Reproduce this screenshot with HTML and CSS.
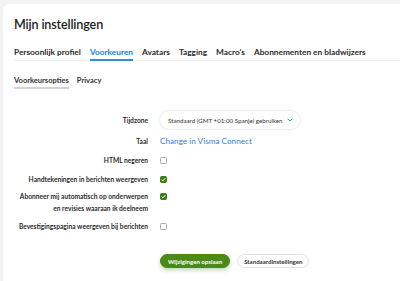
FILE: index.html
```html
<!DOCTYPE html>
<html lang="nl">
<head>
<meta charset="utf-8">
<link rel="stylesheet" href="styles.css">
</head>
<body>
<div class="card">
  <h1 class="title">Mijn instellingen</h1>
  <nav class="tabs">
    <span class="tab">Persoonlijk profiel</span>
    <span class="tab active">Voorkeuren</span>
    <span class="tab">Avatars</span>
    <span class="tab">Tagging</span>
    <span class="tab">Macro's</span>
    <span class="tab">Abonnementen en bladwijzers</span>
  </nav>
  <nav class="subtabs">
    <span class="subtab active">Voorkeursopties</span>
    <span class="subtab">Privacy</span>
  </nav>
  <div class="form">
    <div class="row r1">
      <div class="label">Tijdzone</div>
      <div class="control">
        <div class="select"><span>Standaard (GMT +01:00 Spanje) gebruiken</span>
          <svg class="chev" width="6" height="4" viewBox="0 0 6 4"><path d="M0.6 0.7 L3 3.1 L5.4 0.7" fill="none" stroke="#2f8fd8" stroke-width="1"/></svg>
        </div>
      </div>
    </div>
    <div class="row r2">
      <div class="label">Taal</div>
      <div class="control"><a class="link">Change in Visma Connect</a></div>
    </div>
    <div class="row r3">
      <div class="label">HTML negeren</div>
      <div class="control"><span class="cb"></span></div>
    </div>
    <div class="row r4">
      <div class="label">Handtekeningen in berichten weergeven</div>
      <div class="control"><span class="cb on"><svg width="7" height="7" viewBox="0 0 7 7"><path d="M1.6 3.6 L2.9 4.9 L5.4 2.1" fill="none" stroke="#fff" stroke-width="1"/></svg></span></div>
    </div>
    <div class="row r5">
      <div class="label">Abonneer mij automatisch op onderwerpen<br>en revisies waaraan ik deelneem</div>
      <div class="control"><span class="cb on"><svg width="7" height="7" viewBox="0 0 7 7"><path d="M1.6 3.6 L2.9 4.9 L5.4 2.1" fill="none" stroke="#fff" stroke-width="1"/></svg></span></div>
    </div>
    <div class="row r6">
      <div class="label">Bevestigingspagina weergeven bij berichten</div>
      <div class="control"><span class="cb"></span></div>
    </div>
    <div class="actions">
      <span class="btn primary">Wijzigingen opslaan</span>
      <span class="btn">Standaardinstellingen</span>
    </div>
  </div>
</div>
</body>
</html>
```
FILE: styles.css
```css
html, body { margin: 0; padding: 0; }
body {
  background: #f3f3f3;
  font-family: Lato, "Open Sans", sans-serif;
  color: #252525;
  overflow: hidden;
  height: 281px;
}
.card {
  margin: 4px 0 0 3px;
  background: #fff;
  border-radius: 6px 0 0 0;
  padding: 10px 0 40px 11px;
  min-height: 300px;
  white-space: nowrap;
}
.title {
  margin: 0;
  font-size: 12.6px;
  font-weight: 600;
  line-height: 22px;
  color: #222;
  letter-spacing: -0.15px;
}
.tabs {
  display: flex;
  gap: 9px;
  margin-top: 10px;
  border-bottom: 1px solid #eeeeee;
}
.tab {
  font-size: 8.3px;
  font-weight: 700;
  color: #2b2b2b;
  line-height: 12px;
  padding-bottom: 1px;
  margin-bottom: -1px;
  border-bottom: 2px solid transparent;
}
.tab.active {
  color: #1b7fd1;
  border-bottom-color: #2f8fd8;
}
.subtabs {
  display: flex;
  gap: 8px;
  margin-top: 14px;
}
.subtab {
  font-size: 7.5px;
  font-weight: 700;
  color: #333;
  line-height: 11px;
  padding-bottom: 1px;
  border-bottom: 2px solid transparent;
}
.subtab.active { border-bottom-color: #d3d3d3; }
.form {
  margin-top: 21px;
  display: flex;
  flex-direction: column;
}
.row {
  display: grid;
  grid-template-columns: 134px 1fr;
  column-gap: 12px;
  align-items: center;
}
.label {
  text-align: right;
  font-size: 6.65px;
  font-weight: 700;
  color: #2b2b2b;
  line-height: 12px;
}
.control { display: flex; align-items: center; }
.r1 { height: 20px; }
.r2 { height: 20px; margin-top: 1px; }
.r3 { height: 18px; }
.r4 { height: 18px; margin-top: 1px; }
.r5 { height: 24px; margin-top: 2px; align-items: start; }
.r5 .control { height: 12px; }
.r6 { height: 18px; margin-top: 3px; }
.select {
  display: inline-flex;
  align-items: center;
  gap: 4px;
  height: 18px;
  padding: 0 7px 0 8px;
  border-radius: 9px;
  box-shadow: 0 0 3px rgba(0,0,0,0.16);
  font-size: 6.2px;
  color: #333;
}
.chev { display: block; }
.link {
  font-size: 8.2px;
  color: #2f86cf;
}
.cb {
  display: inline-flex;
  align-items: center;
  justify-content: center;
  width: 5px;
  height: 5px;
  border: 1px solid #a8a8a8;
  border-radius: 1.5px;
}
.cb.on {
  background: #3d7d13;
  border-color: #3d7d13;
}
.cb svg { display: block; flex: none; }
.actions {
  display: flex;
  gap: 7px;
  margin: 19px 0 0 146px;
}
.btn {
  display: inline-flex;
  align-items: center;
  height: 12px;
  padding: 0 6px;
  border-radius: 7px;
  font-size: 6.1px;
  font-weight: 700;
  color: #333;
  border: 1px solid #e2e2e2;
  background: #fff;
}
.btn.primary {
  background: #4a8a17;
  border-color: #4a8a17;
  color: #fff;
  padding: 0 7px;
  box-shadow: 0 2px 4px rgba(74,138,23,0.35);
}
```
